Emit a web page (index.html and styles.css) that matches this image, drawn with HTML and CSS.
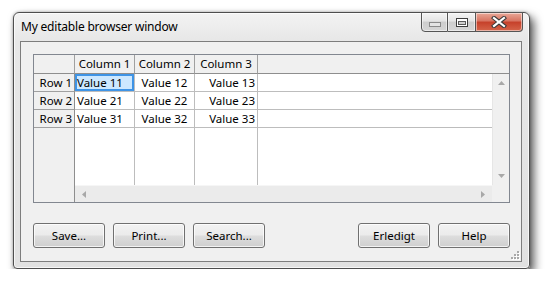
FILE: index.html
```html
<!doctype html>
<html lang="en">
<head>
    <meta charset="UTF-8">
    <title>My editable browser window</title>
    <link rel="stylesheet" href="styles.css">
</head>
<body>
    <div class="window">
        <div class="titlebar">
            <span class="title">My editable browser window</span>
            <div class="caption">
                <span class="cap min">
                    <svg width="12" height="5" viewBox="0 0 12 5"><rect x="0.5" y="0.5" width="11" height="4" fill="#e4e4e4" stroke="#8a8a8a"/></svg>
                </span>
                <span class="cap max">
                    <svg width="12" height="9" viewBox="0 0 12 9"><rect x="0.5" y="0.5" width="11" height="8" fill="#fff" stroke="#3c3c3c"/><rect x="2.5" y="3.5" width="7" height="3" fill="#cfcfcf" stroke="#5a5a5a"/></svg>
                </span>
                <span class="cap close">
                    <svg width="16" height="12" viewBox="0 0 16 12"><path d="M3 2 L13 10 M13 2 L3 10" stroke="#3a3a3a" stroke-width="4.2" stroke-linecap="square"/><path d="M3 2 L13 10 M13 2 L3 10" stroke="#fff" stroke-width="2.2" stroke-linecap="square"/></svg>
                </span>
            </div>
        </div>

        <div class="client">
            <div class="grid">
                <div class="hd corner"></div>
                <div class="hd">Column 1</div>
                <div class="hd">Column 2</div>
                <div class="hd">Column 3</div>
                <div class="hd hfill"></div>

                <div class="rh">Row 1</div>
                <div class="cell left selected">Value 11</div>
                <div class="cell center">Value 12</div>
                <div class="cell right">Value 13</div>
                <div class="cell fill"></div>
                <div class="vscroll">
                    <svg width="7" height="4" viewBox="0 0 7 4"><path d="M0 4 L3.5 0 L7 4 Z" fill="#a8a8a8"/></svg>
                    <svg width="7" height="4" viewBox="0 0 7 4"><path d="M0 0 L3.5 4 L7 0 Z" fill="#a8a8a8"/></svg>
                </div>

                <div class="rh">Row 2</div>
                <div class="cell left">Value 21</div>
                <div class="cell center">Value 22</div>
                <div class="cell right">Value 23</div>
                <div class="cell fill"></div>

                <div class="rh">Row 3</div>
                <div class="cell left">Value 31</div>
                <div class="cell center">Value 32</div>
                <div class="cell right">Value 33</div>
                <div class="cell fill"></div>

                <div class="rh rfill"></div>
                <div class="empty"></div>
                <div class="empty"></div>
                <div class="empty"></div>
                <div class="empty last"></div>

                <div class="hscroll">
                    <svg width="4" height="7" viewBox="0 0 4 7"><path d="M4 0 L0 3.5 L4 7 Z" fill="#a8a8a8"/></svg>
                    <svg width="4" height="7" viewBox="0 0 4 7"><path d="M0 0 L4 3.5 L0 7 Z" fill="#a8a8a8"/></svg>
                </div>
                <div class="sizebox"></div>
            </div>

            <div class="buttons">
                <div class="group">
                    <button class="btn">Save...</button>
                    <button class="btn">Print...</button>
                    <button class="btn">Search...</button>
                </div>
                <div class="group">
                    <button class="btn">Erledigt</button>
                    <button class="btn">Help</button>
                </div>
            </div>

            <svg class="grip" width="10" height="10" viewBox="0 0 10 10">
                <g fill="#fff">
                    <rect x="8" y="2" width="2" height="2"/>
                    <rect x="5" y="5" width="2" height="2"/><rect x="8" y="5" width="2" height="2"/>
                    <rect x="2" y="8" width="2" height="2"/><rect x="5" y="8" width="2" height="2"/><rect x="8" y="8" width="2" height="2"/>
                </g>
                <g fill="#a9a9a9">
                    <rect x="7" y="1" width="2" height="2"/>
                    <rect x="4" y="4" width="2" height="2"/><rect x="7" y="4" width="2" height="2"/>
                    <rect x="1" y="7" width="2" height="2"/><rect x="4" y="7" width="2" height="2"/><rect x="7" y="7" width="2" height="2"/>
                </g>
            </svg>
        </div>
    </div>
</body>
</html>
```

FILE: styles.css
```css
* {
    box-sizing: border-box;
}
body {
    margin: 0;
    background: #fff;
    font-family: "Noto Sans", "Open Sans", sans-serif;
    font-size: 11.5px;
    color: #000;
}
.window {
    margin: 12px 0 0 13px;
    width: 517px;
    height: 257px;
    padding: 0 7px 6px 6px;
    display: flex;
    flex-direction: column;
    border: 1px solid #4e4e4e;
    border-radius: 6px 6px 4px 4px;
    background: linear-gradient(#f3f3f3, #e7e7e7 28px, #e1e1e1);
    box-shadow: inset 0 0 0 1px rgba(255,255,255,0.7), 4px 5px 10px rgba(0,0,0,0.65), 0 0 3px rgba(0,0,0,0.3);
}
.titlebar {
    height: 28px;
    display: flex;
    justify-content: space-between;
    align-items: flex-start;
}
.title {
    padding: 6px 0 0 1px;
    line-height: 16px;
    font-size: 12px;
    letter-spacing: -0.2px;
}
.caption {
    display: flex;
    margin: -1px -1px 0 0;
}
.cap {
    height: 20px;
    display: flex;
    align-items: center;
    justify-content: center;
    border: 1px solid #555;
    border-left: none;
    background: linear-gradient(#f4f4f4, #e4e4e4 45%, #cdcdcd 50%, #d6d6d6);
    box-shadow: inset 0 0 0 1px rgba(255,255,255,0.5);
}
.cap.min {
    width: 27px;
    border-left: 1px solid #555;
    border-radius: 0 0 0 4px;
}
.cap.min svg {
    margin-top: 5px;
}
.cap.max {
    width: 28px;
}
.cap.close {
    width: 47px;
    border-radius: 0 0 4px 0;
    background: linear-gradient(#eaa898, #d77360 45%, #c6402a 50%, #d5654a);
}
.client {
    flex: 1;
    position: relative;
    display: flex;
    flex-direction: column;
    padding: 12px 11px 13px 12px;
    border: 1px solid #7d7d7d;
    background: #f0f0f0;
}
.grid {
    height: 149px;
    display: grid;
    grid-template-columns: 41px 60px 60px 63px 1fr 17px;
    grid-template-rows: 19px 18px 18px 18px 1fr 17px;
    border: 1px solid #828790;
    background: #fff;
}
.hd {
    background: #f0f0f0;
    border-right: 1px solid #a0a0a0;
    border-bottom: 1px solid #8e8e8e;
    text-align: center;
    line-height: 18px;
    white-space: nowrap;
}
.hd.hfill {
    grid-column: span 2;
    border-right: none;
}
.rh {
    background: #f0f0f0;
    border-right: 1px solid #8e8e8e;
    border-bottom: 1px solid #a0a0a0;
    text-align: right;
    padding-right: 2px;
    line-height: 17px;
    white-space: nowrap;
}
.rh.rfill {
    grid-row: span 2;
    border-bottom: none;
}
.cell {
    border-right: 1px solid #bdbdbd;
    border-bottom: 1px solid #bdbdbd;
    padding: 0 2px;
    line-height: 17px;
    white-space: nowrap;
}
.left {
    text-align: left;
}
.center {
    text-align: center;
}
.right {
    text-align: right;
}
.cell.fill {
    border-right: none;
}
.selected {
    background: #cde8ff;
    box-shadow: inset 0 0 0 2px #3f94e6;
}
.empty {
    border-right: 1px solid #bdbdbd;
}
.empty.last {
    border-right: none;
}
.vscroll {
    grid-row: span 4;
    display: flex;
    flex-direction: column;
    justify-content: space-between;
    align-items: center;
    padding: 7px 0 7px 1px;
    background: #f0f0f0;
    border-left: 1px solid #e6e6e6;
}
.hscroll {
    grid-column: span 4;
    display: flex;
    justify-content: space-between;
    align-items: center;
    padding: 0 7px;
    background: #ebebeb;
    border-top: 1px solid #f6f6f6;
}
.sizebox {
    background: #f0f0f0;
}
.buttons {
    margin-top: 20px;
    display: flex;
    justify-content: space-between;
}
.group {
    display: flex;
    gap: 8px;
}
.btn {
    width: 72px;
    height: 25px;
    padding: 0;
    font: inherit;
    color: #000;
    border: 1px solid #707070;
    border-radius: 3px;
    background: linear-gradient(#f2f2f2, #ebebeb 48%, #dddddd 52%, #cfcfcf);
    box-shadow: inset 0 0 0 1px rgba(255,255,255,0.75);
}
.grip {
    position: absolute;
    right: 1px;
    bottom: 1px;
}
```
